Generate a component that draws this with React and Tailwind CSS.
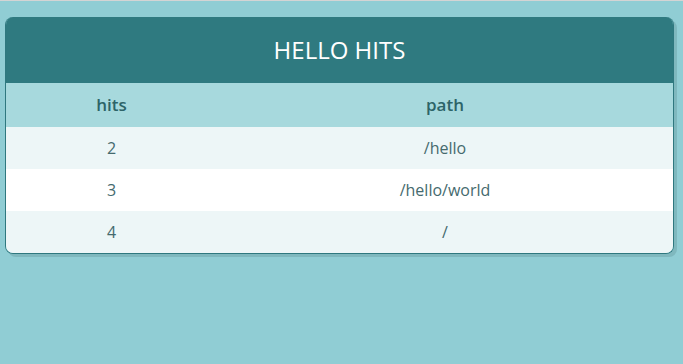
import React from 'react';

const hits = [
  { id: 1, hits: 2, path: '/hello' },
  { id: 2, hits: 3, path: '/hello/world' },
  { id: 3, hits: 4, path: '/' },
];

const App = () => {
  return (
    <div className="min-h-[364px] bg-[#90cdd4] border-t border-[#d4d4d4] pt-4 px-[5px] font-['Open_Sans',sans-serif]">
      <div className="w-[669px] rounded-lg overflow-hidden border border-t-0 border-[#2f787f] shadow-[3px_3px_0_#7fb8be]">
        <div className="h-[66px] bg-[#2f7a80] flex items-center justify-center">
          <h1 className="text-[24px] text-white">HELLO HITS</h1>
        </div>

        <div className="grid grid-cols-[211px_1fr] h-[44px] items-center bg-[#a7d9dd] text-[17px] font-semibold text-[#2d6468]">
          <div className="text-center">hits</div>
          <div className="text-center">path</div>
        </div>

        {hits.map((row, i) => (
          <div
            key={row.id}
            className={`grid grid-cols-[211px_1fr] h-[42px] items-center text-[16px] text-[#456a6e] ${i % 2 === 0 ? 'bg-[#edf6f7]' : 'bg-white'}`}
          >
            <div className="text-center">{row.hits}</div>
            <div className="text-center">{row.path}</div>
          </div>
        ))}
      </div>
    </div>
  );
};

export default App;
